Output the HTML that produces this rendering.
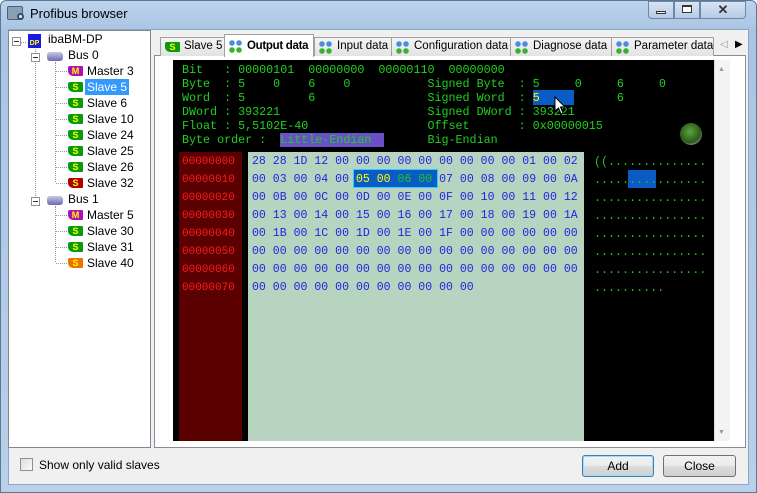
<!DOCTYPE html>
<html><head><meta charset="utf-8"><style>
*{margin:0;padding:0;box-sizing:border-box}
body{width:757px;height:493px;overflow:hidden;background:#fff;font-family:"Liberation Sans",sans-serif;font-size:12px;position:relative}
.frame{position:absolute;left:0;top:0;width:757px;height:493px;background:linear-gradient(#bcd3ec,#a9c4e3 30px,#b9d0ea);border:1px solid #5d7896;border-radius:6px 6px 0 0}
.client{position:absolute;left:8px;top:29px;width:741px;height:456px;background:#f0f0f0;border:1px solid #8ea6c2}
.abs{position:absolute}
.mono{font-family:"Liberation Mono",monospace;font-size:11.7px;white-space:pre;line-height:14px}
.tree{left:8px;top:30px;width:143px;height:418px;background:#fff;border:1px solid #828790}
.ti{position:absolute;height:16px;line-height:16px;font-size:12px;color:#000;white-space:nowrap}
.tag{position:absolute;width:15px;height:10px;border-radius:2px 1px 1px 5px;font:bold 9px/10px "Liberation Sans",sans-serif;text-align:center;color:#ff0}
.sl{background:#0a9a0a}.ma{background:#b010b0}.re{background:#b00000}.or{background:#f07000}
.dot{position:absolute;border-color:#999;border-style:dotted;border-width:0}
.tab{position:absolute;top:37px;height:19px;border:1px solid #a0a0a0;border-bottom:none;background:linear-gradient(#f5f5f5,#e3e3e3);font-size:11.5px;line-height:17px;padding-left:22px;color:#000;white-space:nowrap;overflow:hidden}
.ticon{position:absolute;left:4px;top:3px;width:14px;height:13px;background:radial-gradient(circle at 3px 3px,#4a8ee0 2.5px,transparent 3px),radial-gradient(circle at 10px 3px,#4a8ee0 2.5px,transparent 3px),radial-gradient(circle at 3px 10px,#3cb030 2.5px,transparent 3px),radial-gradient(circle at 10px 10px,#3cb030 2.5px,transparent 3px)}
.btn{position:absolute;height:22px;border:1px solid #707070;border-radius:3px;background:linear-gradient(#f2f2f2,#ebebeb 50%,#dddddd 50%,#cfcfcf);text-align:center;line-height:20px;font-size:12px}
</style></head><body>
<div class="frame"></div>
<div class="abs" style="left:7px;top:6px;width:16px;height:14px;background:#8aa0b8;border:1px solid #506070;border-radius:2px"></div>
<div class="abs" style="left:17px;top:13px;width:7px;height:7px;border:2px solid #305070;border-radius:50%;background:#cfe"></div>
<div class="abs" style="left:30px;top:6px;font-size:13px;color:#000">Profibus browser</div>
<div class="abs" style="left:648px;top:1px;width:26px;height:18px;border:1px solid #6c87a8;border-radius:0 0 0 4px;background:linear-gradient(#d8e5f3,#b5cbe4)"></div>
<div class="abs" style="left:656px;top:11px;width:10px;height:3px;border:1px solid #333;background:#fff"></div>
<div class="abs" style="left:674px;top:1px;width:26px;height:18px;border:1px solid #6c87a8;background:linear-gradient(#d8e5f3,#b5cbe4)"></div>
<div class="abs" style="left:682px;top:5px;width:10px;height:8px;border:1px solid #333;border-top-width:2px;background:#fff"></div>
<div class="abs" style="left:700px;top:1px;width:46px;height:18px;border:1px solid #6c87a8;border-radius:0 0 4px 0;background:linear-gradient(#d8e5f3,#b5cbe4);text-align:center;font:bold 13px/16px 'Liberation Sans',sans-serif;color:#333">✕</div>
<div class="client"></div>

<!-- tree -->
<div class="abs tree"></div>
<div class="dot" style="left:16px;top:42px;width:10px;border-top-width:1px"></div>
<div class="dot" style="left:35px;top:46px;height:152px;border-left-width:1px"></div>
<div class="dot" style="left:55px;top:62px;height:120px;border-left-width:1px"></div>
<div class="dot" style="left:55px;top:206px;height:56px;border-left-width:1px"></div>
<div class="abs" style="left:12px;top:37px;width:9px;height:9px;border:1px solid #919191;background:#fff"></div>
<div class="abs" style="left:14px;top:41px;width:5px;height:1px;background:#333"></div>
<div class="abs" style="left:28px;top:34px;width:13px;height:14px;background:#1a1ae0;color:#ff0;font:bold 7px/20px 'Liberation Sans';text-align:center">DP</div>
<div class="ti" style="left:48px;top:31px">ibaBM-DP</div>
<div class="abs" style="left:31px;top:53px;width:9px;height:9px;border:1px solid #919191;background:#fff"></div>
<div class="abs" style="left:33px;top:57px;width:5px;height:1px;background:#333"></div>
<div class="abs" style="left:47px;top:52px;width:16px;height:9px;background:linear-gradient(#c8c8e8,#6a6aa8);border-radius:3px"></div>
<div class="ti" style="left:68px;top:47px">Bus 0</div>
<div class="abs" style="left:31px;top:197px;width:9px;height:9px;border:1px solid #919191;background:#fff"></div>
<div class="abs" style="left:33px;top:201px;width:5px;height:1px;background:#333"></div>
<div class="abs" style="left:47px;top:196px;width:16px;height:9px;background:linear-gradient(#c8c8e8,#6a6aa8);border-radius:3px"></div>
<div class="ti" style="left:68px;top:191px">Bus 1</div>

<div class="dot" style="left:56px;top:71px;width:11px;border-top-width:1px"></div><div class="tag ma" style="left:68px;top:66px">M</div><div class="ti" style="left:87px;top:63px">Master 3</div>
<div class="dot" style="left:56px;top:87px;width:11px;border-top-width:1px"></div><div class="tag sl" style="left:68px;top:82px">S</div><div class="ti" style="left:85px;top:79px;background:#3399ff;color:#fff;padding:0 2px">Slave 5</div>
<div class="dot" style="left:56px;top:103px;width:11px;border-top-width:1px"></div><div class="tag sl" style="left:68px;top:98px">S</div><div class="ti" style="left:87px;top:95px">Slave 6</div>
<div class="dot" style="left:56px;top:119px;width:11px;border-top-width:1px"></div><div class="tag sl" style="left:68px;top:114px">S</div><div class="ti" style="left:87px;top:111px">Slave 10</div>
<div class="dot" style="left:56px;top:135px;width:11px;border-top-width:1px"></div><div class="tag sl" style="left:68px;top:130px">S</div><div class="ti" style="left:87px;top:127px">Slave 24</div>
<div class="dot" style="left:56px;top:151px;width:11px;border-top-width:1px"></div><div class="tag sl" style="left:68px;top:146px">S</div><div class="ti" style="left:87px;top:143px">Slave 25</div>
<div class="dot" style="left:56px;top:167px;width:11px;border-top-width:1px"></div><div class="tag sl" style="left:68px;top:162px">S</div><div class="ti" style="left:87px;top:159px">Slave 26</div>
<div class="dot" style="left:56px;top:183px;width:11px;border-top-width:1px"></div><div class="tag re" style="left:68px;top:178px">S</div><div class="ti" style="left:87px;top:175px">Slave 32</div>
<div class="dot" style="left:56px;top:215px;width:11px;border-top-width:1px"></div><div class="tag ma" style="left:68px;top:210px">M</div><div class="ti" style="left:87px;top:207px">Master 5</div>
<div class="dot" style="left:56px;top:231px;width:11px;border-top-width:1px"></div><div class="tag sl" style="left:68px;top:226px">S</div><div class="ti" style="left:87px;top:223px">Slave 30</div>
<div class="dot" style="left:56px;top:247px;width:11px;border-top-width:1px"></div><div class="tag sl" style="left:68px;top:242px">S</div><div class="ti" style="left:87px;top:239px">Slave 31</div>
<div class="dot" style="left:56px;top:263px;width:11px;border-top-width:1px"></div><div class="tag or" style="left:68px;top:258px">S</div><div class="ti" style="left:87px;top:255px">Slave 40</div>

<!-- tabs -->
<div class="abs" style="left:154px;top:55px;width:592px;height:393px;border:1px solid #898c95;background:#fff"></div>
<div class="tab" style="left:160px;width:65px;padding-left:23px"><div class="tag sl" style="left:4px;top:4px">S</div>Slave 5</div>
<div class="tab" style="left:314px;width:78px"><div class="ticon"></div>Input data</div>
<div class="tab" style="left:391px;width:120px"><div class="ticon"></div>Configuration data</div>
<div class="tab" style="left:510px;width:102px"><div class="ticon"></div>Diagnose data</div>
<div class="tab" style="left:611px;width:103px"><div class="ticon"></div>Parameter data</div>
<div class="tab" style="left:224px;top:34px;height:23px;width:90px;background:#fff;font-weight:bold;line-height:22px;padding-left:22px;letter-spacing:-0.3px"><div class="ticon" style="top:5px"></div>Output data</div>
<div class="abs" style="left:720px;top:39px;font-size:10px;color:#999">◁</div>
<div class="abs" style="left:735px;top:39px;font-size:10px;color:#000">▶</div>

<!-- black panel -->
<div class="abs" style="left:173px;top:60px;width:557px;height:381px;background:#000"></div>
<div class="abs" style="left:714px;top:60px;width:16px;height:381px;background:#f4f4f4;border-left:1px solid #ddd"></div>
<div class="abs" style="left:718px;top:66px;font-size:7px;color:#999">▲</div>
<div class="abs" style="left:718px;top:429px;font-size:7px;color:#999">▼</div>

<div class="abs" style="left:280px;top:133px;width:104px;height:14px;background:#6a50c8"></div>
<div class="abs" style="left:533px;top:90px;width:41px;height:15px;background:#0a5bc4"></div>
<div class="abs mono" style="left:182px;top:63px;color:#1ed21e">Bit   : 00000101  00000000  00000110  00000000
Byte  : 5    0    6    0           Signed Byte  : 5     0     6     0
Word  : 5         6                Signed Word  : <span style="color:#ff0">5</span>           6
DWord : 393221                     Signed DWord : 393221
Float : 5,5102E-40                 Offset       : 0x00000015
Byte order :  Little-Endian        Big-Endian</div>
<svg class="abs" style="left:554px;top:96px" width="14" height="20"><path d="M1 1 L1 15 L4.5 12 L7 18 L9 17 L6.5 11 L11 11 Z" fill="#fff" stroke="#000"/></svg>
<div class="abs" style="left:680px;top:123px;width:22px;height:22px;border-radius:50%;background:radial-gradient(circle at 45% 40%,#5fa040,#2a5a18 60%,#888 75%,#ccc)"></div>

<div class="abs" style="left:179px;top:152px;width:63px;height:289px;background:#5a0000"></div>
<div class="abs mono" style="left:182px;top:153px;color:#ff1a1a;line-height:18px;font-size:11px">00000000
00000010
00000020
00000030
00000040
00000050
00000060
00000070</div>
<div class="abs" style="left:248px;top:152px;width:336px;height:289px;background:#b6d4c0"></div>
<div class="abs" style="left:353px;top:169px;width:85px;height:19px;background:#0a5bc4;border:1px solid #3cf"></div>
<div class="abs mono" style="left:252px;top:153px;color:#2424e0;line-height:18px;font-size:11.55px">28 28 1D 12 00 00 00 00 00 00 00 00 00 01 00 02
00 03 00 04 00 <span style="color:#ff0">05 00</span> <span style="color:#1ec81e">06 00</span> 07 00 08 00 09 00 0A
00 0B 00 0C 00 0D 00 0E 00 0F 00 10 00 11 00 12
00 13 00 14 00 15 00 16 00 17 00 18 00 19 00 1A
00 1B 00 1C 00 1D 00 1E 00 1F 00 00 00 00 00 00
00 00 00 00 00 00 00 00 00 00 00 00 00 00 00 00
00 00 00 00 00 00 00 00 00 00 00 00 00 00 00 00
00 00 00 00 00 00 00 00 00 00 00</div>
<div class="abs" style="left:628px;top:170px;width:28px;height:18px;background:#0a5bc4"></div>
<div class="abs mono" style="left:594px;top:153px;color:#1ec81e;line-height:18px;font-size:11.7px">((..............
................
................
................
................
................
................
..........</div>

<!-- bottom -->
<div class="abs" style="left:20px;top:458px;width:13px;height:13px;border:1px solid #8f8f8f;background:linear-gradient(135deg,#ddd,#fafafa)"></div>
<div class="abs" style="left:39px;top:458px;font-size:12px">Show only valid slaves</div>
<div class="btn" style="left:582px;top:455px;width:72px;border-color:#3c7fb1;box-shadow:inset 0 0 0 1px #9fdcf7">Add</div>
<div class="btn" style="left:663px;top:455px;width:73px">Close</div>
</body></html>
